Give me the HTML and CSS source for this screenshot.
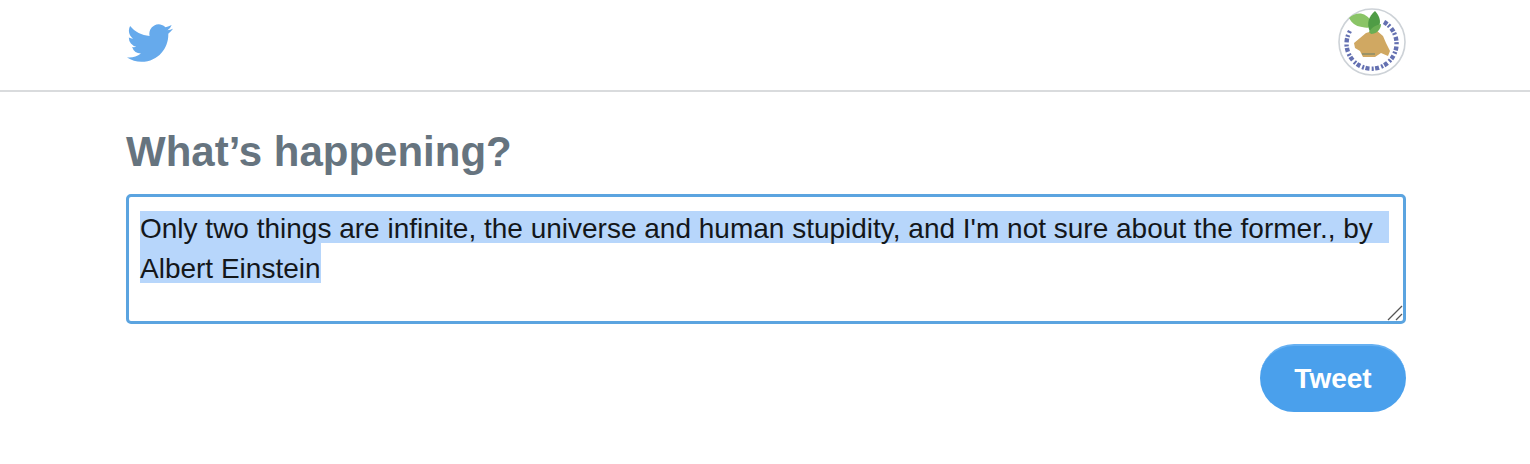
FILE: index.html
```html
<!DOCTYPE html>
<html lang="en">
<head>
<meta charset="utf-8">
<title>Tweet</title>
<link rel="stylesheet" href="styles.css">
</head>
<body>
<header class="topbar">
  <svg class="bird" viewBox="0 2.1 24 19.8" aria-hidden="true"><path d="M23.953 4.57a10 10 0 01-2.825.775 4.958 4.958 0 002.163-2.723c-.951.555-2.005.959-3.127 1.184a4.92 4.92 0 00-8.384 4.482C7.69 8.095 4.067 6.13 1.64 3.162a4.822 4.822 0 00-.666 2.475c0 1.71.87 3.213 2.188 4.096a4.904 4.904 0 01-2.228-.616v.06a4.923 4.923 0 003.946 4.827 4.996 4.996 0 01-2.212.085 4.936 4.936 0 004.604 3.417 9.867 9.867 0 01-6.102 2.105c-.39 0-.779-.023-1.17-.067a13.995 13.995 0 007.557 2.209c9.053 0 13.998-7.496 13.998-13.985 0-.21 0-.42-.015-.63A9.935 9.935 0 0024 4.59z"/></svg>
  <svg class="avatar" viewBox="0 0 68 68" aria-hidden="true">
    <defs><filter id="soft" x="-10%" y="-10%" width="120%" height="120%"><feGaussianBlur stdDeviation="0.7"/></filter></defs>
    <circle cx="34" cy="34" r="33" fill="#fff" stroke="#cdd2d7" stroke-width="1.6"/>
    <g filter="url(#soft)">
      <path d="M46 14A25 25 0 1 1 12 23" fill="none" stroke="#5360a8" stroke-width="4.4" stroke-dasharray="4 1.4 2 2.2" opacity=".9"/>
      <path d="M16 35L22 30L28 25L38 22L45 28L48 35L52 43L50 48L43 45L37 49L25 49L22 43L17 40Z" fill="#d0a862"/>
      <path d="M11 10C18 3 28 4 33 13C35 19 31 21 24 19C17 18 14 15 11 10Z" fill="#8ac466"/>
      <path d="M37 3C42 8 43 14 41 18C39 22 35 24 32 24C28 15 31 8 37 3Z" fill="#4f9c44"/>
      <path d="M31 24C34 19 38 17 43 16C43 22 38 26 33 26Z" fill="#6aae52"/>
      <path d="M24 46h13" stroke="#8c8f6a" stroke-width="1.6" fill="none"/>
    </g>
  </svg>
</header>
<main class="composer">
  <h1 class="title">What’s happening?</h1>
  <div class="field">
    <div class="entry"><span class="sel">Only two things are infinite, the universe and human stupidity, and I'm not sure about the former., by&nbsp;</span><span class="sel sel-next">Albert Einstein</span></div>
    <svg class="grip" viewBox="0 0 16 16" aria-hidden="true"><path d="M1 15L15 1M9 15l6-6" stroke="#555" stroke-width="1.3" fill="none"/><path d="M2 15L15 2M10 15l5-5" stroke="#fff" stroke-width="1" fill="none" transform="translate(1 1)"/></svg>
  </div>
  <div class="actions"><button class="tweet" type="button">Tweet</button></div>
</main>
</body>
</html>
```
FILE: styles.css
```css
* { box-sizing: border-box; }
html, body { margin: 0; padding: 0; background: #fff; }
body {
  font-family: "Liberation Sans", Arial, sans-serif;
  width: 1530px;
  height: 464px;
  overflow: hidden;
}
.topbar {
  height: 92px;
  padding: 8px 124px 0 127px;
  border-bottom: 2px solid #d9dbdd;
  display: flex;
  justify-content: space-between;
  align-items: flex-start;
}
.bird { width: 46px; height: 38px; margin-top: 16px; fill: #66aaec; }
.avatar { width: 68px; height: 68px; display: block; }
.composer { padding: 0 124px 0 126px; }
.title {
  margin: 36px 0 0;
  font-size: 42px;
  line-height: 48px;
  font-weight: 700;
  color: #66747f;
}
.field {
  position: relative;
  margin-top: 18px;
  height: 130px;
  padding: 14px 11px 0;
  border: 3px solid #5ba4e0;
  border-radius: 5px;
  background: #fff;
}
.entry {
  font-size: 28px;
  line-height: 29px;
  color: #14171a;
}
.sel { display: block; width: fit-content; padding: 3px 8px 0 0; background: #b7d6fb; }
.sel-next { padding: 11px 0 0; }
.grip { position: absolute; right: 0; bottom: 0; width: 16px; height: 16px; }
.actions { display: flex; justify-content: flex-end; margin-top: 20px; }
.tweet {
  width: 146px;
  height: 68px;
  border: 0;
  border-top: 2px solid #66b0f2;
  border-radius: 34px;
  background: #4aa0ec;
  color: #fff;
  font: 700 28px "Liberation Sans", Arial, sans-serif;
}
```
